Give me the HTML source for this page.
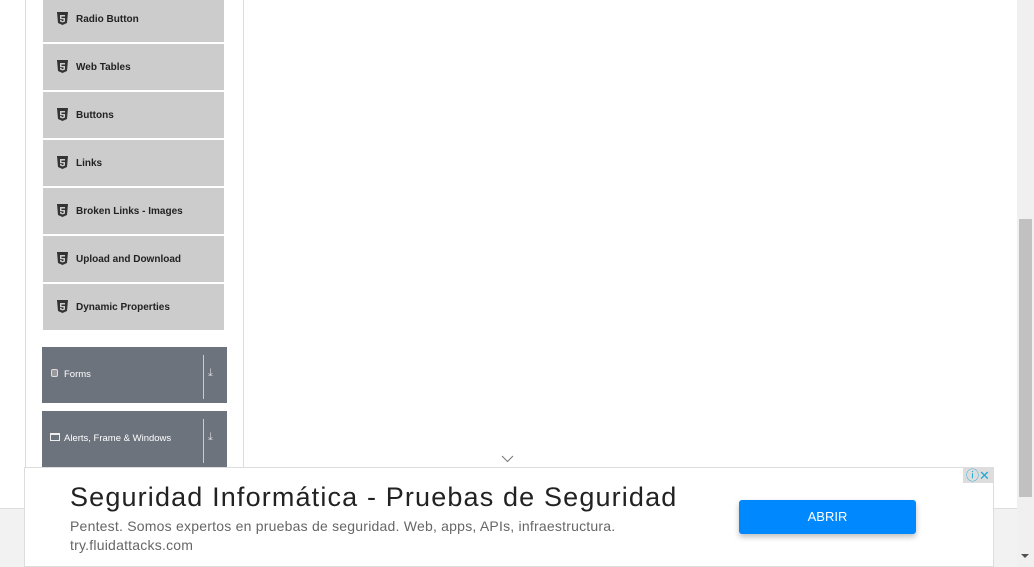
<!DOCTYPE html>
<html><head><meta charset="utf-8"><style>
*{margin:0;padding:0;box-sizing:border-box}
body{width:1034px;height:567px;overflow:hidden;background:#fff;font-family:"Liberation Sans",sans-serif;position:relative}
.vl{position:absolute;top:0;width:1px;height:508px;background:#dcdcdc}
.item{position:absolute;left:43px;width:181px;height:46px;background:#cccccc;font-size:10px;font-weight:bold;color:#222;}
.item svg{position:absolute;left:14px;top:16px}
.item span{position:absolute;left:33px;top:18px}
.grp{position:absolute;left:42px;width:185px;height:56px;background:#6c737d;color:#fff;font-size:9.5px}
.grp .t{position:absolute;left:22px;top:22px}
.grp .d{position:absolute;left:161px;top:8px;width:1px;height:44px;background:#c9ccd0}
.grp .a{position:absolute;left:166px;top:20px;font-size:11px;color:#d8d8d8}
</style></head><body>
<div class="vl" style="left:25px"></div>
<div class="vl" style="left:243px"></div>
<div class="item" style="top:-4px"><svg width="11" height="13" viewBox="0 0 11 13"><path d="M0 0h11l-1 11-4.5 2-4.5-2z" fill="#333"/><path d="M3 3h5v1.5H4.5v1.5H8V9.5L5.5 10.5 3 9.5V8h1.5v.7l1 .4 1-.4V7.3H3z" fill="#ccc"/></svg><span>Radio Button</span></div>
<div class="item" style="top:44px"><svg width="11" height="13" viewBox="0 0 11 13"><path d="M0 0h11l-1 11-4.5 2-4.5-2z" fill="#333"/><path d="M3 3h5v1.5H4.5v1.5H8V9.5L5.5 10.5 3 9.5V8h1.5v.7l1 .4 1-.4V7.3H3z" fill="#ccc"/></svg><span>Web Tables</span></div>
<div class="item" style="top:92px"><svg width="11" height="13" viewBox="0 0 11 13"><path d="M0 0h11l-1 11-4.5 2-4.5-2z" fill="#333"/><path d="M3 3h5v1.5H4.5v1.5H8V9.5L5.5 10.5 3 9.5V8h1.5v.7l1 .4 1-.4V7.3H3z" fill="#ccc"/></svg><span>Buttons</span></div>
<div class="item" style="top:140px"><svg width="11" height="13" viewBox="0 0 11 13"><path d="M0 0h11l-1 11-4.5 2-4.5-2z" fill="#333"/><path d="M3 3h5v1.5H4.5v1.5H8V9.5L5.5 10.5 3 9.5V8h1.5v.7l1 .4 1-.4V7.3H3z" fill="#ccc"/></svg><span>Links</span></div>
<div class="item" style="top:188px"><svg width="11" height="13" viewBox="0 0 11 13"><path d="M0 0h11l-1 11-4.5 2-4.5-2z" fill="#333"/><path d="M3 3h5v1.5H4.5v1.5H8V9.5L5.5 10.5 3 9.5V8h1.5v.7l1 .4 1-.4V7.3H3z" fill="#ccc"/></svg><span>Broken Links - Images</span></div>
<div class="item" style="top:236px"><svg width="11" height="13" viewBox="0 0 11 13"><path d="M0 0h11l-1 11-4.5 2-4.5-2z" fill="#333"/><path d="M3 3h5v1.5H4.5v1.5H8V9.5L5.5 10.5 3 9.5V8h1.5v.7l1 .4 1-.4V7.3H3z" fill="#ccc"/></svg><span>Upload and Download</span></div>
<div class="item" style="top:284px"><svg width="11" height="13" viewBox="0 0 11 13"><path d="M0 0h11l-1 11-4.5 2-4.5-2z" fill="#333"/><path d="M3 3h5v1.5H4.5v1.5H8V9.5L5.5 10.5 3 9.5V8h1.5v.7l1 .4 1-.4V7.3H3z" fill="#ccc"/></svg><span>Dynamic Properties</span></div>
<div class="grp" style="top:347px"><div style="position:absolute;left:9px;top:22px;width:7px;height:8px;border:1px solid #ddd;border-radius:2px;background:#999"></div><span class="t">Forms</span><div class="d"></div><span class="a">⤓</span></div>
<div class="grp" style="top:411px"><div style="position:absolute;left:8px;top:22px;width:10px;height:8px;border:1px solid #eee;border-top-width:2px"></div><span class="t">Alerts, Frame &amp; Windows</span><div class="d"></div><span class="a">⤓</span></div>
<svg style="position:absolute;left:501px;top:455px" width="13" height="8"><path d="M1 1l5.5 5.5L12 1" stroke="#777" fill="none"/></svg>
<div style="position:absolute;left:0;top:508px;width:1017px;height:59px;background:#f2f2f2;border-top:1px solid #ddd"></div>
<div style="position:absolute;left:1017px;top:0;width:17px;height:567px;background:#f0f0f0"></div>
<div style="position:absolute;left:1019px;top:219px;width:13px;height:278px;background:#c1c1c1"></div>
<div style="position:absolute;left:1021px;top:554px;width:0;height:0;border-left:4px solid transparent;border-right:4px solid transparent;border-top:4px solid #505050"></div>
<div style="position:absolute;left:24px;top:467px;width:970px;height:100px;background:#fff;border:1px solid #ddd">
<div style="position:absolute;left:45px;top:14px;font-size:27px;color:#222;letter-spacing:1.15px">Seguridad Informática - Pruebas de Seguridad</div>
<div style="position:absolute;left:45px;top:50px;font-size:14px;color:#666;letter-spacing:.22px">Pentest. Somos expertos en pruebas de seguridad. Web, apps, APIs, infraestructura.</div>
<div style="position:absolute;left:45px;top:69px;font-size:14px;color:#666;letter-spacing:.22px">try.fluidattacks.com</div>
<div style="position:absolute;left:714px;top:32px;width:177px;height:34px;background:#0088ff;border-radius:3px;box-shadow:0 3px 6px rgba(0,0,0,.25);color:#fff;font-size:13px;text-align:center;line-height:34px">ABRIR</div>
<div style="position:absolute;left:938px;top:0;width:30px;height:15px;background:#ddd;color:#19a9d6;font-size:13px;line-height:15px;text-align:center">ⓘ✕</div>
</div>
</body></html>
